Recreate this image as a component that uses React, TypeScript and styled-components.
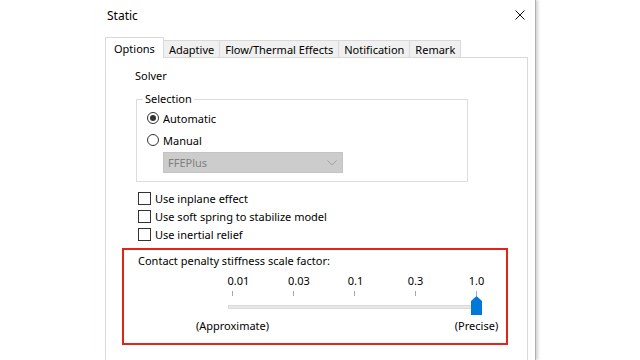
import React from 'react';
import styled, { createGlobalStyle } from 'styled-components';

const GlobalStyle = createGlobalStyle`
  body {
    margin: 0;
    background: #ffffff;
    font-family: 'Noto Sans', 'Open Sans', sans-serif;
    font-size: 11px;
    color: #000000;
  }
`;

const Screen = styled.div`
  width: 640px;
  height: 360px;
  overflow: hidden;
  background: #ffffff;
  display: flex;
`;

const Dialog = styled.div`
  margin-left: 95px;
  width: 440px;
  height: 360px;
  display: flex;
  flex-direction: column;
  border-right: 1px solid #b0b0b0;
  box-shadow: 2px 0 3px rgba(0, 0, 0, 0.18);
  background: #ffffff;
`;

const TitleBar = styled.div`
  height: 30px;
  display: flex;
  align-items: center;
  justify-content: space-between;
  padding: 0 10px 0 12px;
  font-size: 12px;
`;

const CloseButton = styled.div`
  width: 10px;
  height: 10px;
  display: flex;
`;

const Body = styled.div`
  flex: 1;
  display: flex;
  flex-direction: column;
  padding: 7px 7px 0 10px;
`;

const TabStrip = styled.div`
  display: flex;
  align-items: flex-end;
  height: 21px;
  margin-bottom: -1px;
  position: relative;
  z-index: 1;
`;

const Tab = styled.div<{ $active?: boolean }>`
  box-sizing: border-box;
  height: ${(p) => (p.$active ? '21px' : '18px')};
  padding: 0 ${(p) => (p.$active ? '8px' : '5px')};
  margin-left: ${(p) => (p.$active ? '0' : '-1px')};
  display: flex;
  align-items: center;
  justify-content: center;
  border: 1px solid #d9d9d9;
  border-bottom: ${(p) => (p.$active ? 'none' : '1px solid #d9d9d9')};
  background: ${(p) => (p.$active ? '#ffffff' : '#f0f0f0')};
  white-space: nowrap;
  font-size: 11px;
  line-height: 1;
`;

const Panel = styled.div`
  flex: 1;
  border: 1px solid #d9d9d9;
  border-bottom: none;
  padding: 10px 0 0 30px;
  display: flex;
  flex-direction: column;
  align-items: flex-start;
`;

const SectionLabel = styled.div`
  line-height: 16px;
  margin-left: -1px;
`;

const GroupBox = styled.fieldset`
  box-sizing: border-box;
  width: 332px;
  margin: 7px 0 0 0;
  padding: 0 6px 8px 6px;
  border: 1px solid #dcdcdc;
  display: flex;
  flex-direction: column;
  align-items: flex-start;
`;

const Legend = styled.legend`
  padding: 0 2px;
  line-height: 16px;
`;

const OptionRow = styled.label<{ $gap?: number }>`
  height: 20px;
  display: flex;
  align-items: center;
  gap: 4px;
  margin: ${(p) => p.$gap ?? 0}px 0 0 4px;
  white-space: nowrap;
`;

const RadioCircle = styled.span<{ $checked?: boolean }>`
  box-sizing: border-box;
  width: 12px;
  height: 12px;
  border: 1px solid #333333;
  border-radius: 50%;
  display: flex;
  align-items: center;
  justify-content: center;

  &::after {
    content: '';
    width: 6px;
    height: 6px;
    border-radius: 50%;
    background: #333333;
    display: ${(p) => (p.$checked ? 'block' : 'none')};
  }
`;

const Combo = styled.div`
  box-sizing: border-box;
  width: 180px;
  height: 21px;
  margin: 2px 0 0 20px;
  padding: 0 5px 0 4px;
  background: #cccccc;
  border: 1px solid #c4c4c4;
  color: #7f7f7f;
  display: flex;
  align-items: center;
  justify-content: space-between;
`;

const CheckList = styled.div`
  margin-top: 7px;
  display: flex;
  flex-direction: column;
`;

const CheckRow = styled.label`
  height: 18px;
  display: flex;
  align-items: center;
  gap: 4px;
  margin-left: 2px;
  white-space: nowrap;
`;

const CheckBox = styled.span`
  box-sizing: border-box;
  width: 13px;
  height: 13px;
  border: 1px solid #333333;
  background: #ffffff;
`;

const Highlight = styled.div`
  box-sizing: border-box;
  width: 386px;
  margin: 5px 0 0 -14px;
  padding: 3px 0 9px 14px;
  border: 2px solid #e2231a;
  display: flex;
  flex-direction: column;
`;

const FactorTitle = styled.div`
  line-height: 16px;
`;

const Scale = styled.div`
  margin-left: 64px;
  width: 305px;
  display: flex;
  flex-direction: column;
`;

const ScaleRow = styled.div<{ $gap?: number }>`
  display: flex;
  margin-top: ${(p) => p.$gap ?? 0}px;
`;

const Cell = styled.div<{ $shift?: number }>`
  width: 61px;
  height: 16px;
  line-height: 16px;
  display: flex;
  justify-content: center;
  padding-left: ${(p) => p.$shift ?? 0}px;
  box-sizing: border-box;
  white-space: nowrap;
`;

const TickCell = styled.div`
  width: 61px;
  height: 5px;
  display: flex;
  justify-content: center;
`;

const Tick = styled.span`
  width: 1px;
  height: 5px;
  background: #a8a8a8;
`;

const TrackRow = styled.div`
  position: relative;
  height: 20px;
`;

const Track = styled.div`
  box-sizing: border-box;
  margin: 9px 0 0 26px;
  width: 254px;
  height: 4px;
  background: #e7e7e7;
  border: 1px solid #dadada;
`;

const Thumb = styled.svg`
  position: absolute;
  left: 269px;
  top: 0;
`;

const ticks = [
  { label: '0.01', shift: 12 },
  { label: '0.03', shift: 11 },
  { label: '0.1', shift: 2 },
  { label: '0.3', shift: 0 },
  { label: '1.0', shift: 0 },
];

const App: React.FC = () => {
  return (
    <>
      <GlobalStyle />
      <Screen>
        <Dialog>
          <TitleBar>
            <span>Static</span>
            <CloseButton>
              <svg width='10' height='10' viewBox='0 0 10 10'>
                <path d='M0.5 0.5 L9.5 9.5 M9.5 0.5 L0.5 9.5' stroke='#111' strokeWidth='1' fill='none' />
              </svg>
            </CloseButton>
          </TitleBar>
          <Body>
            <TabStrip>
              <Tab $active>Options</Tab>
              <Tab>Adaptive</Tab>
              <Tab>Flow/Thermal Effects</Tab>
              <Tab>Notification</Tab>
              <Tab>Remark</Tab>
            </TabStrip>
            <Panel>
              <SectionLabel>Solver</SectionLabel>
              <GroupBox>
                <Legend>Selection</Legend>
                <OptionRow $gap={1}>
                  <RadioCircle $checked />
                  Automatic
                </OptionRow>
                <OptionRow $gap={2}>
                  <RadioCircle />
                  Manual
                </OptionRow>
                <Combo>
                  <span>FFEPlus</span>
                  <svg width='10' height='6' viewBox='0 0 10 6'>
                    <path d='M0.5 0.5 L5 5 L9.5 0.5' stroke='#a0a0a0' strokeWidth='1' fill='none' />
                  </svg>
                </Combo>
              </GroupBox>
              <CheckList>
                <CheckRow>
                  <CheckBox />
                  Use inplane effect
                </CheckRow>
                <CheckRow>
                  <CheckBox />
                  Use soft spring to stabilize model
                </CheckRow>
                <CheckRow>
                  <CheckBox />
                  Use inertial relief
                </CheckRow>
              </CheckList>
              <Highlight>
                <FactorTitle>Contact penalty stiffness scale factor:</FactorTitle>
                <Scale>
                  <ScaleRow $gap={4}>
                    {ticks.map((t) => (
                      <Cell key={t.label} $shift={t.shift}>
                        {t.label}
                      </Cell>
                    ))}
                  </ScaleRow>
                  <ScaleRow $gap={2}>
                    {ticks.map((t) => (
                      <TickCell key={t.label}>
                        <Tick />
                      </TickCell>
                    ))}
                  </ScaleRow>
                  <TrackRow>
                    <Track />
                    <Thumb width='11' height='19' viewBox='0 0 11 19'>
                      <polygon points='0,5 5.5,0 11,5 11,19 0,19' fill='#0078d7' />
                    </Thumb>
                  </TrackRow>
                  <ScaleRow $gap={2}>
                    <Cell>(Approximate)</Cell>
                    <Cell />
                    <Cell />
                    <Cell />
                    <Cell>(Precise)</Cell>
                  </ScaleRow>
                </Scale>
              </Highlight>
            </Panel>
          </Body>
        </Dialog>
      </Screen>
    </>
  );
};

export default App;
